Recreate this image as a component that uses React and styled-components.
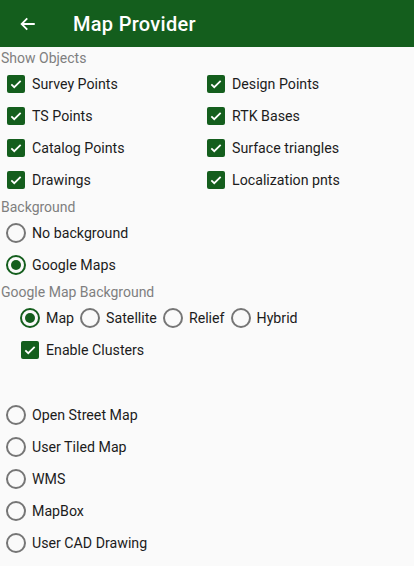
import styled, { createGlobalStyle } from "styled-components";

const GREEN = "#145e1d";

const Global = createGlobalStyle`
    html, body {
        margin: 0;
        padding: 0;
        background: #fafafa;
        font-family: Roboto, "Liberation Sans", sans-serif;
    }
`;

const showObjects = [
    ["Survey Points", "Design Points"],
    ["TS Points", "RTK Bases"],
    ["Catalog Points", "Surface triangles"],
    ["Drawings", "Localization pnts"],
];

const mapTypes = ["Map", "Satellite", "Relief", "Hybrid"];

const otherProviders = [
    "Open Street Map",
    "User Tiled Map",
    "WMS",
    "MapBox",
    "User CAD Drawing",
];

function CheckBox() {
    return (
        <Box>
            <svg width="14" height="14" viewBox="0 0 24 24">
                <path
                    d="M4 12.5l5 5L20 6.5"
                    fill="none"
                    stroke="#fff"
                    strokeWidth="3"
                />
            </svg>
        </Box>
    );
}

function Radio({ checked }) {
    return <Circle $checked={checked}>{checked && <Dot />}</Circle>;
}

export default function App() {
    return (
        <Page>
            <Global />
            <Header>
                <svg width="18" height="18" viewBox="0 0 24 24">
                    <path
                        d="M21 12H4M11 4.5L3.5 12l7.5 7.5"
                        fill="none"
                        stroke="#fff"
                        strokeWidth="2.4"
                    />
                </svg>
                <Title>Map Provider</Title>
            </Header>

            <Label>Show Objects</Label>
            <Grid>
                {showObjects.flat().map((name) => (
                    <Row key={name} $indent={7}>
                        <CheckBox />
                        <Text>{name}</Text>
                    </Row>
                ))}
            </Grid>

            <Label>Background</Label>
            <Row $indent={6}>
                <Radio />
                <Text>No background</Text>
            </Row>
            <Row $indent={6}>
                <Radio checked />
                <Text>Google Maps</Text>
            </Row>

            <Label>Google Map Background</Label>
            <Row $indent={20}>
                {mapTypes.map((t, i) => (
                    <InlineItem key={t}>
                        <Radio checked={i === 0} />
                        <Text>{t}</Text>
                    </InlineItem>
                ))}
            </Row>
            <Row $indent={21}>
                <CheckBox />
                <Text>Enable Clusters</Text>
            </Row>

            <Providers>
                {otherProviders.map((p) => (
                    <Row key={p} $indent={6}>
                        <Radio />
                        <Text>{p}</Text>
                    </Row>
                ))}
            </Providers>
        </Page>
    );
}

const Page = styled.div`
    width: 414px;
    height: 566px;
    background: #fafafa;
    overflow: hidden;
`;

const Header = styled.div`
    height: 47px;
    background: ${GREEN};
    display: flex;
    align-items: center;
    padding-left: 19px;
    gap: 36px;
`;

const Title = styled.div`
    color: #fff;
    font-size: 20px;
    font-weight: 500;
    letter-spacing: 0.3px;
`;

const Label = styled.div`
    height: 20px;
    line-height: 20px;
    padding-top: 1px;
    padding-left: 1px;
    font-size: 14px;
    color: #7f7f7f;
`;

const Grid = styled.div`
    display: grid;
    grid-template-columns: 200px 1fr;
`;

const Row = styled.div`
    height: 32px;
    display: flex;
    align-items: center;
    padding-left: ${(p) => p.$indent}px;
`;

const InlineItem = styled.div`
    display: flex;
    align-items: center;
    margin-right: 6px;
`;

const Text = styled.span`
    font-size: 14.2px;
    color: #1c1c1c;
    margin-left: 6px;
`;

const Box = styled.div`
    width: 18px;
    height: 18px;
    border-radius: 2px;
    background: ${GREEN};
    display: flex;
    align-items: center;
    justify-content: center;
    margin-right: 1px;
`;

const Circle = styled.div`
    width: 20px;
    height: 20px;
    box-sizing: border-box;
    border-radius: 50%;
    border: 2px solid ${(p) => (p.$checked ? GREEN : "#767676")};
    display: flex;
    align-items: center;
    justify-content: center;
`;

const Dot = styled.div`
    width: 10px;
    height: 10px;
    border-radius: 50%;
    background: ${GREEN};
`;

const Providers = styled.div`
    margin-top: 33px;
`;
